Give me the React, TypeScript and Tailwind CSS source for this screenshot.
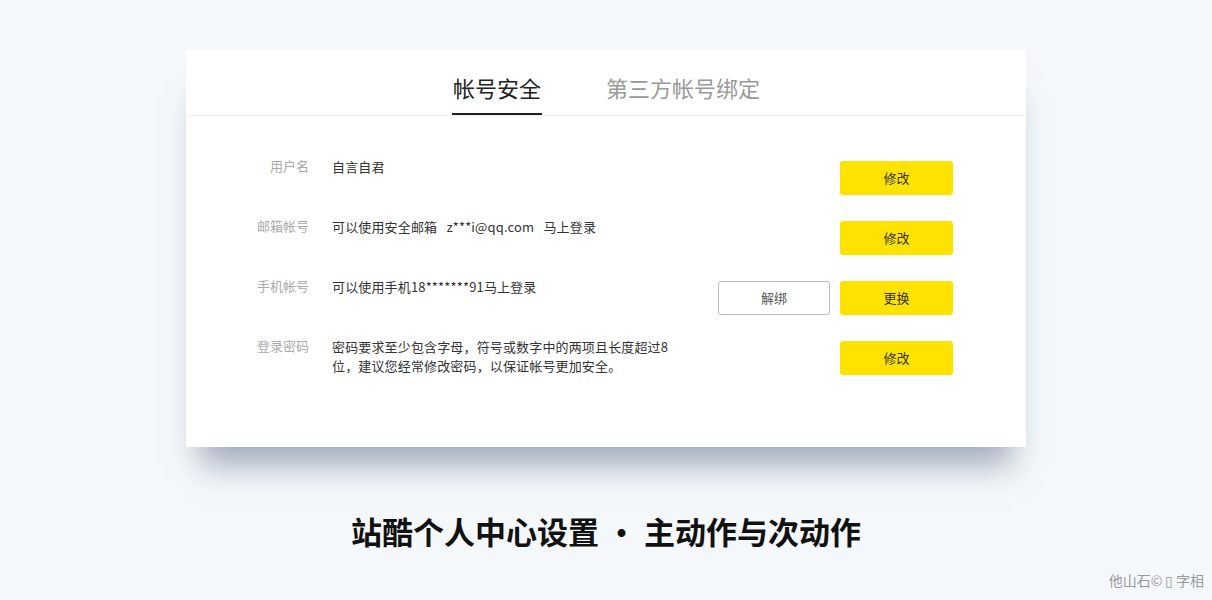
const rows = [
  { label: "用户名", value: ["自言自君"], actions: [{ text: "修改", primary: true }] },
  {
    label: "邮箱帐号",
    value: ["可以使用安全邮箱\u00a0\u00a0 z***i@qq.com \u00a0 马上登录"],
    actions: [{ text: "修改", primary: true }],
  },
  {
    label: "手机帐号",
    value: ["可以使用手机18*******91马上登录"],
    actions: [
      { text: "解绑", primary: false },
      { text: "更换", primary: true },
    ],
  },
  {
    label: "登录密码",
    value: ["密码要求至少包含字母，符号或数字中的两项且长度超过8位，建议您经常修改密码，以保证帐号更加安全。"],
    actions: [{ text: "修改", primary: true }],
  },
];

export default function App() {
  return (
    <div
      className="relative min-h-[600px] bg-[#f4f8fb] pt-[50px]"
      style={{ fontFamily: '"Noto Sans CJK SC", "Noto Sans", sans-serif' }}
    >
      {/* Card */}
      <div className="mx-auto h-[397px] w-[840px] bg-white shadow-[0_32px_30px_-14px_rgba(95,110,135,0.55)]">
        {/* Tabs */}
        <div className="flex h-[66px] justify-center gap-[64px] border-b border-[#eeeeee]">
          <div className="flex flex-col items-center">
            <span className="mt-[21px] text-[22px] leading-[32px] text-[#222]">帐号安全</span>
            <span className="mt-auto h-[2px] w-[90px] bg-[#222]" />
          </div>
          <span className="mt-[21px] text-[22px] leading-[32px] text-[#999]">第三方帐号绑定</span>
        </div>

        {/* Rows */}
        <div className="flex flex-col pt-[40px] pr-[73px]">
          {rows.map((row, i) => (
            <div key={i} className="flex h-[60px] items-start">
              <div className="w-[123px] text-right text-[13px] leading-[20px] text-[#aaa]">{row.label}</div>
              <div className="ml-[23px] w-[345px] text-[13px] leading-[19px] tracking-[0.15px] text-[#333]">
                {row.value.map((v, j) => (
                  <div key={j} className="mt-[1px]">{v}</div>
                ))}
              </div>
              <div className="ml-auto mt-[5px] flex gap-[10px]">
                {row.actions.map((a, k) =>
                  a.primary ? (
                    <button
                      key={k}
                      className="h-[34px] w-[113px] rounded-[3px] bg-[#ffe300] text-[13px] text-[#333]"
                    >
                      {a.text}
                    </button>
                  ) : (
                    <button
                      key={k}
                      className="h-[34px] w-[112px] rounded-[3px] border border-[#bbbbbb] bg-white text-[13px] text-[#555]"
                    >
                      {a.text}
                    </button>
                  )
                )}
              </div>
            </div>
          ))}
        </div>
      </div>

      {/* Caption */}
      <h1 className="mt-[64px] text-center text-[31px] font-bold leading-[40px] text-[#111]">
        站酷个人中心设置 · 主动作与次动作
      </h1>

      {/* Watermark */}
      <span className="absolute bottom-[9px] right-[8px] text-[14px] text-[#999]">他山石©{"\u2009"}▯{"\u2009"}字相</span>
    </div>
  );
}
